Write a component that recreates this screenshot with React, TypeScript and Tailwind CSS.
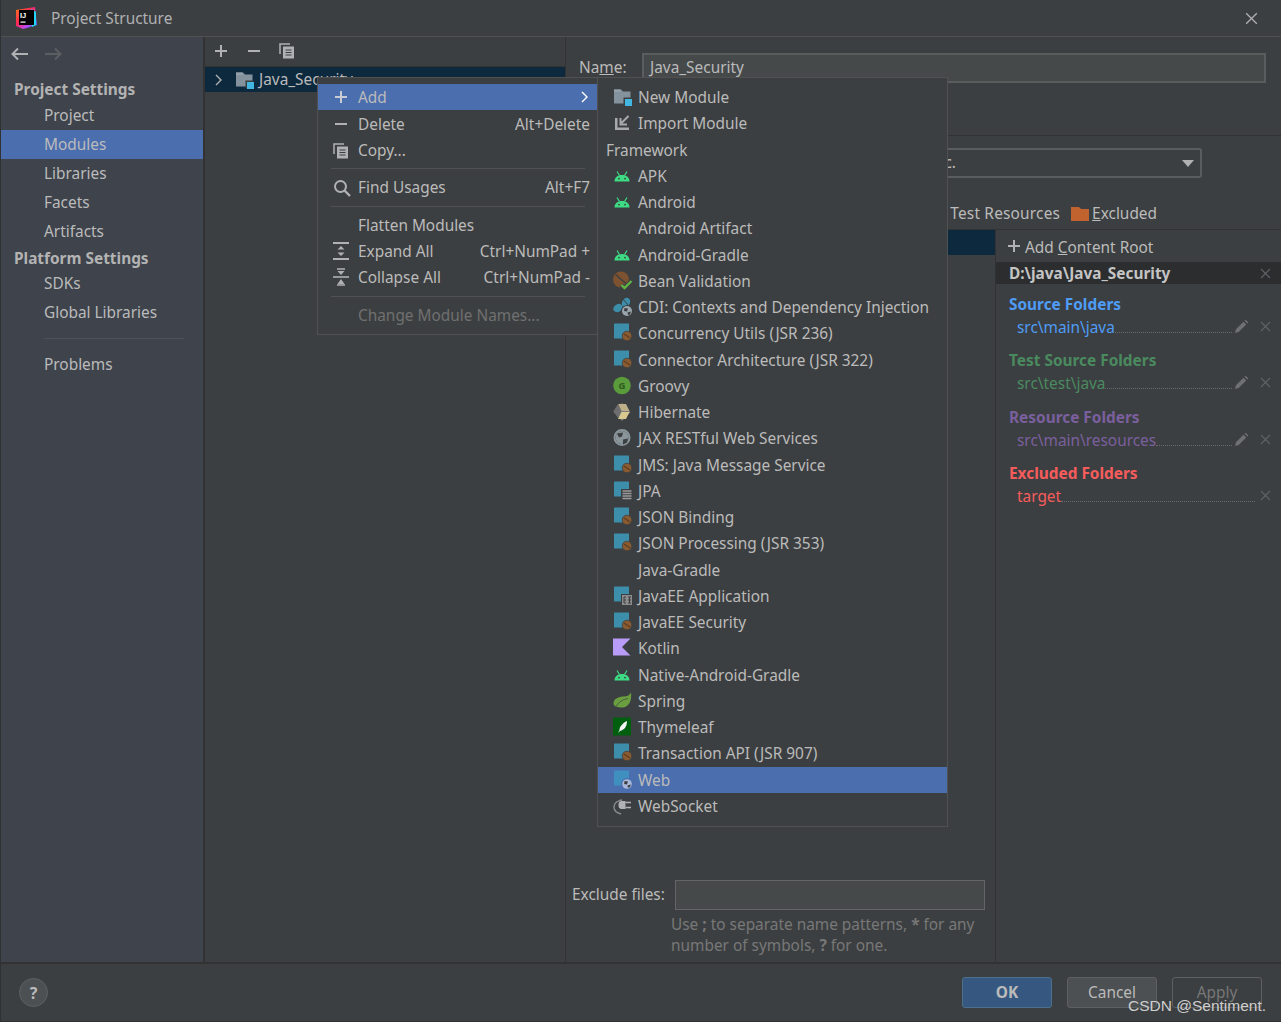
import React from "react";

const Square = ({ c = "#3d8eab" }: { c?: string }) => <rect x="1" y="0.5" width="15" height="15" rx="0.5" fill={c} />;
const Bean = () => (
  <g>
    <circle cx="14" cy="13" r="4.8" fill="#8a5a30" stroke="#3c3f41" strokeWidth="0.8" />
    <path d="M11 11 L17 15" stroke="#5e3d20" strokeWidth="1.2" />
  </g>
);
const Globe = ({ cx, cy, r, c = "#9aa5ad" }: { cx: number; cy: number; r: number; c?: string }) => (
  <g>
    <circle cx={cx} cy={cy} r={r} fill={c} />
    <path d={`M${cx - r * 0.5} ${cy - r * 0.6} l${r * 0.7} ${r * 0.1} l-${r * 0.2} ${r * 0.6} l-${r * 0.6} -${r * 0.1}z M${cx + r * 0.1} ${cy + r * 0.3} l${r * 0.7} -${r * 0.2} l-${r * 0.2} ${r * 0.6} l-${r * 0.4} ${r * 0.1}z`} fill="#3c3f41" />
  </g>
);

const S = ({ children, w = 20, h = 20 }: { children: React.ReactNode; w?: number; h?: number }) => (
  <svg width={w} height={h} viewBox="0 0 20 20" className="shrink-0">{children}</svg>
);

const ModuleIcon = () => (
  <S>
    <path d="M1 2.5h7l2 2h7.5v12H1z" fill="#84929e" />
    <path d="M1 2.5h6.5v2.5H1z" fill="#93a0aa" />
    <rect x="10.5" y="10.5" width="8" height="8" fill="#3c3f41" />
    <rect x="12" y="12" width="7" height="7" fill="#40b6e0" />
  </S>
);
const ImportIcon = () => (
  <S>
    <path d="M2 5v12h14v-2.5H4.5V5z" fill="#a7a9ab" />
    <path d="M15.5 3 L8.5 10 M7.5 5v6.5h6.5" fill="none" stroke="#a7a9ab" strokeWidth="2" />
  </S>
);
const AndroidIcon = () => (
  <S>
    <path d="M1.5 15.5c0-4 3-6.5 7.500-6.500s7.500 2.500 7.500 6.500z" fill="#3ddc84" />
    <path d="M4 5.500l2.500 4M14 5.500l-2.500 4" stroke="#3ddc84" strokeWidth="1.2" />
    <circle cx="6" cy="12.6" r="0.9" fill="#3c3f41" />
    <circle cx="12" cy="12.6" r="0.9" fill="#3c3f41" />
  </S>
);
const BeanValidation = () => (
  <S>
    <circle cx="8" cy="8.5" r="8" fill="#7d5230" />
    <path d="M2.5 3.5 L13.5 13" stroke="#3c3f41" strokeWidth="1.4" />
    <path d="M8.5 14l3 3 7-7" fill="none" stroke="#3c3f41" strokeWidth="4.5" />
    <path d="M8.5 14l3 3 7-7" fill="none" stroke="#62b543" strokeWidth="2.4" />
  </S>
);
const CdiIcon = () => (
  <S>
    <ellipse cx="13" cy="5.5" rx="3.8" ry="5" transform="rotate(30 13 5.5)" fill="#3d8eab" />
    <ellipse cx="5" cy="11" rx="3.8" ry="5" transform="rotate(60 5 11)" fill="#3d8eab" />
    <path d="M10 2 L16 9" stroke="#3c3f41" strokeWidth="1" />
    <circle cx="14" cy="14" r="6" fill="#3c3f41" />
    <Globe cx={14} cy={14} r={5} />
  </S>
);
const JeeIcon = () => (
  <S>
    <Square />
    <Bean />
  </S>
);
const GroovyIcon = () => (
  <S>
    <circle cx="9" cy="9.5" r="8.8" fill="#5a9b3b" />
    <text x="9" y="13" textAnchor="middle" fontSize="9.5" fontWeight="700" fill="#2f5c1e" fontFamily="Noto Sans, sans-serif">G</text>
  </S>
);
const HibernateIcon = () => (
  <S>
    <path d="M9 1l8.500 9-8.500 9-8.500-9z" fill="#7c7c7c" />
    <path d="M5 2h8l3.500 7H8.500z" fill="#bdb089" />
    <path d="M8.500 10h8l-3.500 7H5z" fill="#d8c98f" />
    <path d="M5 2l3.500 7-3.500 7-4.500-7z" fill="#6d6d6d" />
  </S>
);
const GlobeIcon = () => (
  <S>
    <circle cx="9" cy="9.5" r="7.5" fill="none" stroke="#8b959c" strokeWidth="2" />
    <circle cx="9" cy="9.5" r="6.5" fill="#8b959c" />
    <path d="M4 5.500l6-1-1 4-3 1zM10 11.500l5-1-1 4-4 2z" fill="#3c3f41" />
  </S>
);
const JpaIcon = () => (
  <S>
    <Square />
    <rect x="8" y="8" width="12" height="12" fill="#3c3f41" />
    <path d="M9.500 10h9M9.500 12.500h9M9.500 15h9M9.500 17.500h9" stroke="#9a9a9a" strokeWidth="1.5" />
  </S>
);
const EeAppIcon = () => (
  <S>
    <Square />
    <rect x="8" y="8" width="12" height="12" fill="#3c3f41" />
    <rect x="9" y="9" width="10" height="10" fill="#8c8c8c" />
    <path d="M11 11v6M16.500 11v6M11 11h2M11 14h2M11 17h2M15 11h3M15 14h3M15 17h3" stroke="#3c3f41" strokeWidth="1" />
  </S>
);
const KotlinIcon = () => (
  <S>
    <path d="M0 0.5h17.500L9 9l8.500 8.500H0z" fill="#b99bf8" />
  </S>
);
const SpringIcon = () => (
  <S>
    <path d="M18 1.500c1 8-2 15-9 15-4 0-8.500-1-8.500-4C.5 7.500 6 5.500 11 5.500c3 0 5-1 7-4z" fill="#6a9f3f" />
    <path d="M3 15.500C6 10.500 10 8.500 15 7.500" stroke="#3c3f41" strokeWidth="0.7" fill="none" />
  </S>
);
const ThymeleafIcon = () => (
  <S>
    <rect x="0" y="0.500" width="18" height="18" fill="#005f0f" />
    <path d="M14 4c0 6-3 9-7 10l-2 2 1.500-3c0-3 3-7 7.500-9z" fill="#f4f4f4" />
  </S>
);
const WebIcon = () => (
  <S>
    <Square c="#3f8fbf" />
    <circle cx="14" cy="14" r="6" fill="#4b6eaf" />
    <Globe cx={14} cy={14} r={4.8} c="#a8b8d8" />
  </S>
);
const SocketIcon = () => (
  <S>
    <path d="M9 4a7 7 0 0 0-3 .8A7 7 0 0 0 1 11c0 4 3 6 7 7" fill="none" stroke="#8a8d8f" strokeWidth="1.400" />
    <path d="M8 5h4.500v8H8a3 3 0 0 1-2.500-3V8A3 3 0 0 1 8 5z" fill="#afb1b3" />
    <path d="M12.500 6.500H18M12.500 11.500H18" stroke="#afb1b3" strokeWidth="1.600" />
  </S>
);
const Blank = () => <span className="w-5 shrink-0" />;

type Row = { label?: React.ReactNode; icon?: React.ReactNode; plain?: boolean; active?: boolean };
const frameworkRows: Row[] = [
  { label: "New Module", icon: <ModuleIcon /> },
  { label: "Import Module", icon: <ImportIcon /> },
  { label: "Framework", plain: true },
  { label: "APK", icon: <AndroidIcon /> },
  { label: "Android", icon: <AndroidIcon /> },
  { label: "Android Artifact", icon: <Blank /> },
  { label: "Android-Gradle", icon: <AndroidIcon /> },
  { label: "Bean Validation", icon: <BeanValidation /> },
  { label: "CDI: Contexts and Dependency Injection", icon: <CdiIcon /> },
  { label: "Concurrency Utils (JSR 236)", icon: <JeeIcon /> },
  { label: "Connector Architecture (JSR 322)", icon: <JeeIcon /> },
  { label: "Groovy", icon: <GroovyIcon /> },
  { label: "Hibernate", icon: <HibernateIcon /> },
  { label: "JAX RESTful Web Services", icon: <GlobeIcon /> },
  { label: "JMS: Java Message Service", icon: <JeeIcon /> },
  { label: "JPA", icon: <JpaIcon /> },
  { label: "JSON Binding", icon: <JeeIcon /> },
  { label: "JSON Processing (JSR 353)", icon: <JeeIcon /> },
  { label: "Java-Gradle", icon: <Blank /> },
  { label: "JavaEE Application", icon: <EeAppIcon /> },
  { label: "JavaEE Security", icon: <JeeIcon /> },
  { label: "Kotlin", icon: <KotlinIcon /> },
  { label: "Native-Android-Gradle", icon: <AndroidIcon /> },
  { label: "Spring", icon: <SpringIcon /> },
  { label: "Thymeleaf", icon: <ThymeleafIcon /> },
  { label: "Transaction API (JSR 907)", icon: <JeeIcon /> },
  { label: "Web", icon: <WebIcon />, active: true },
  { label: "WebSocket", icon: <SocketIcon /> },
];

const PlusIcon = ({ c = "#afb1b3" }: { c?: string }) => (
  <svg width="16" height="16" viewBox="0 0 16 16" className="shrink-0"><path d="M8 2v12M2 8h12" stroke={c} strokeWidth="2" /></svg>
);
const MinusIcon = () => (
  <svg width="16" height="16" viewBox="0 0 16 16" className="shrink-0"><path d="M2 8h12" stroke="#afb1b3" strokeWidth="2" /></svg>
);
const CopyIcon = () => (
  <svg width="16" height="16" viewBox="0 0 16 16" className="shrink-0">
    <path d="M1 11V1h10" fill="none" stroke="#afb1b3" strokeWidth="1.5" />
    <rect x="4" y="3.500" width="11" height="12" fill="#afb1b3" />
    <path d="M6.500 7h6M6.500 9.500h6M6.500 12h6" stroke="#3c3f41" strokeWidth="1.200" />
  </svg>
);
const SearchIcon = () => (
  <svg width="18" height="18" viewBox="0 0 18 18" className="shrink-0">
    <circle cx="7.500" cy="7.500" r="5.500" fill="none" stroke="#afb1b3" strokeWidth="2" />
    <path d="M11.500 11.500L17 17" stroke="#afb1b3" strokeWidth="2.400" />
  </svg>
);
const ExpandIcon = () => (
  <svg width="16" height="18" viewBox="0 0 16 18" className="shrink-0">
    <path d="M0 1h16M0 17h16" stroke="#afb1b3" strokeWidth="2" />
    <path d="M8 4l3.500 3.500h-7zM8 14l3.500-3.500h-7z" fill="#afb1b3" />
  </svg>
);
const CollapseIcon = () => (
  <svg width="16" height="18" viewBox="0 0 16 18" className="shrink-0">
    <path d="M0 9h16" stroke="#afb1b3" strokeWidth="1.600" />
    <path d="M8 7L4.500 3h7zM8 11l3.500 5h-7z" fill="#afb1b3" />
    <path d="M4 1h8M4 17h8" stroke="#afb1b3" strokeWidth="1.400" />
  </svg>
);
const Cross = ({ c = "#5f6264", s = 11 }: { c?: string; s?: number }) => (
  <svg width={s} height={s} viewBox="0 0 11 11" className="shrink-0"><path d="M1 1l9 9M10 1l-9 9" stroke={c} strokeWidth="1.100" /></svg>
);
const Pencil = () => (
  <svg width="15" height="15" viewBox="0 0 14 14" className="shrink-0">
    <path d="M1 13l.8-3.400 7-7 2.600 2.600-7 7zM9.800 1.600l1-1 2.600 2.600-1 1z" fill="#6e7072" />
  </svg>
);
const Sep = () => <div className="mx-[13px] h-px bg-[#515151]" />;

const M1 = ({ h = "h-[26px]", icon, label, sc, cls = "" }: { h?: string; icon?: React.ReactNode; label: string; sc?: string; cls?: string }) => (
  <div className={`flex items-center pr-[8px] ${h} ${cls}`}>
    <span className="w-[40px] pl-[15px] flex items-center justify-start shrink-0">{icon}</span>
    <span className="mt-[1px]">{label}</span>
    {sc && <span className="ml-auto mt-[1px]">{sc}</span>}
  </div>
);

const Nav = ({ label, active, head }: { label: string; active?: boolean; head?: string }) => (
  <div className={`flex items-center ${head ? `${head} pt-[3px] pl-[13px] font-bold text-[#b3b3b3]` : "h-[28.8px] pl-[43px] pt-[1px]"} ${active ? "bg-[#4b6eaf]" : ""}`}>{label}</div>
);

const FolderRow = ({ path, color, pencil = true }: { path: string; color: string; pencil?: boolean }) => (
  <div className="flex items-center h-[22px] pl-[21px] pr-[10px]">
    <span style={{ color }} className="leading-none mt-[3px]">{path}</span>
    <span className="flex-1 self-end mb-[4px] border-b border-dotted border-[#6a6a6a]" />
    {pencil && <span className="ml-[2px] w-[15px] flex"><Pencil /></span>}
    <span className={pencil ? "ml-[11px] flex" : "ml-[5px] flex"}><Cross c="#606365" /></span>
  </div>
);

const Group = ({ title, color, path, pencil, mt }: { title: string; color: string; path: string; pencil?: boolean; mt: string }) => (
  <div className={mt}>
    <div className="h-[23px] flex items-center pt-[2px] pl-[13px] font-bold" style={{ color }}>{title}</div>
    <FolderRow path={path} color={color} pencil={pencil} />
  </div>
);

export default function App() {
  return (
    <div className="relative w-[1281px] h-[1022px] overflow-hidden flex flex-col bg-[#3c3f41] text-[#bbbbbb] text-[15.4px] border-l border-b border-[#2f3133] font-['Noto_Sans','Open_Sans',sans-serif]">
      {/* title */}
      <div className="h-[37px] shrink-0 flex items-center border-b border-[#515151] pl-[14px] pr-[23px]">
        <svg width="22" height="22" viewBox="0 0 22 22" className="shrink-0">
          <defs>
            <linearGradient id="ij" x1="0" y1="0" x2="1" y2="1">
              <stop offset="0" stopColor="#f97a12" />
              <stop offset="0.4" stopColor="#fe2857" />
              <stop offset="0.7" stopColor="#b74af7" />
              <stop offset="1" stopColor="#087cfa" />
            </linearGradient>
          </defs>
          <path d="M1 3L20 0l2 18-14 4-7-3z" fill="url(#ij)" />
          <path d="M16 2l5 3v13l-4 2z" fill="#21d7f7" />
          <rect x="4" y="3" width="15" height="15" fill="#000" />
          <text x="5" y="11" fontSize="7.500" fontWeight="700" fill="#fff" fontFamily="Liberation Sans, sans-serif">IJ</text>
          <rect x="5.500" y="14.500" width="5" height="1.200" fill="#fff" />
        </svg>
        <span className="ml-[14px] mt-[2px] text-[#afb1b3]">Project Structure</span>
        <span className="ml-auto flex"><Cross c="#afb1b3" s={13} /></span>
      </div>

      {/* body */}
      <div className="h-[927px] shrink-0 flex border-b-2 border-[#323232]">
        <aside className="w-[202px] shrink-0 bg-[#3e434c]">
          <div className="h-[38px] pb-[4px] flex items-center pl-[9px] gap-[13px]">
            <svg width="20" height="16" viewBox="0 0 20 16"><path d="M18 8H3M8 2.500L2.500 8 8 13.500" fill="none" stroke="#afb1b3" strokeWidth="2" /></svg>
            <svg width="20" height="16" viewBox="0 0 20 16"><path d="M2 8h15M12 2.500L17.500 8 12 13.500" fill="none" stroke="#5c5f62" strokeWidth="2" /></svg>
          </div>
          <Nav head="h-[26px]" label="Project Settings" />
          <Nav label="Project" />
          <Nav label="Modules" active />
          <Nav label="Libraries" />
          <Nav label="Facets" />
          <Nav label="Artifacts" />
          <Nav head="h-[24px]" label="Platform Settings" />
          <Nav label="SDKs" />
          <Nav label="Global Libraries" />
          <div className="mt-[11px] ml-[43px] mr-[19px] h-px bg-[#4d515a]" />
          <div className="mt-[11px]"><Nav label="Problems" /></div>
        </aside>
        <div className="w-[2px] shrink-0 bg-[#323232]" />
        <section className="w-[361px] shrink-0 border-r border-[#323232]">
          <div className="h-[30px] pb-[2px] flex items-center pl-[8px] gap-[17px] border-b border-[#323232]">
            <PlusIcon /><MinusIcon /><CopyIcon />
          </div>
          <div className="h-[25px] flex items-center bg-[#0d293e] pl-[9px]">
            <svg width="10" height="12" viewBox="0 0 10 12" className="shrink-0"><path d="M2 1l5 5-5 5" fill="none" stroke="#afb1b3" strokeWidth="1.400" /></svg>
            <span className="ml-[11px] flex"><ModuleIcon /></span>
            <span className="ml-[4px] mt-[1px]">Java_Security</span>
          </div>
        </section>

        <main className="flex-1 min-w-0 flex flex-col">
          <div className="h-[99px] shrink-0 border-b border-[#323232] flex items-start pt-[16px] pl-[13px] pr-[15px]">
            <span className="w-[63px] h-[30px] flex items-center">Na<span className="underline">m</span>e:</span>
            <div className="flex-1 h-[30px] bg-[#45494a] border-2 border-[#5a5d5e] flex items-center pl-[6px]">Java_Security</div>
          </div>
          <div className="h-[94px] shrink-0 border-b border-[#323232] pl-[74px] pr-[79px] pt-[12px] flex flex-col">
            <div className="h-[30px] rounded-[3px] border-2 border-[#5a5d5e] flex items-center justify-end pr-[6px]">
              <span className="mr-[226px] whitespace-nowrap">etc.</span>
              <svg width="12" height="7" viewBox="0 0 12 7" className="shrink-0"><path d="M0 0h12L6 7z" fill="#afb1b3" /></svg>
            </div>
            <div className="mt-[26px] h-[20px] flex items-center justify-end -mr-[79px] pr-[124px]">
              <span className="tracking-[0.2px]">Test Resources</span>
              <svg width="18" height="14" viewBox="0 0 18 14" className="ml-[11px]"><path d="M0 0h8l2 2h8v12H0z" fill="#c1632f" /></svg>
              <span className="ml-[3px]"><span className="underline">E</span>xcluded</span>
            </div>
          </div>
          <div className="flex-1 min-h-0 flex">
            <div className="w-[430px] shrink-0 flex flex-col border-r border-[#323232]">
              <div className="h-[25px] bg-[#0d293e]" />
              <div className="mt-auto pl-[6px] pr-[10px] pb-[6px]">
                <div className="flex items-center">
                  <span className="w-[103px] mb-[1px]">Exclude files:</span>
                  <div className="flex-1 h-[30px] bg-[#45494a] border border-[#646464]" />
                </div>
                <div className="mt-[4px] ml-[99px] text-[#787878] leading-[21px]">
                  Use <b>;</b> to separate name patterns, <b>*</b> for any<br />number of symbols, <b>?</b> for one.
                </div>
              </div>
            </div>
            <div className="flex-1 min-w-0 flex flex-col">
              <div className="h-[32px] flex items-center pl-[10px]">
                <PlusIcon />
                <span className="ml-[3px] mt-[3px]">Add <span className="underline">C</span>ontent Root</span>
              </div>
              <div className="h-[22px] bg-[#2b2d2f] flex items-center pl-[13px] pr-[10px] pt-[1px] font-bold text-[#c4c4c4]">
                D:\java\Java_Security
                <span className="ml-auto flex"><Cross c="#606365" /></span>
              </div>
              <Group mt="mt-[8px]" title="Source Folders" color="#4e9cf5" path="src\main\java" pencil />
              <Group mt="mt-[11px]" title="Test Source Folders" color="#4a8a5f" path="src\test\java" pencil />
              <Group mt="mt-[12px]" title="Resource Folders" color="#7a5f9e" path="src\main\resources" pencil />
              <Group mt="mt-[11px]" title="Excluded Folders" color="#f75c5c" path="target" pencil={false} />
            </div>
          </div>
        </main>
      </div>

      {/* footer */}
      <div className="flex-1 flex items-center pl-[18px] pr-[19px]">
        <div className="w-[29px] h-[29px] rounded-full bg-[#4c5052] border border-[#5e6060] flex items-center justify-center font-bold text-[16px]">?</div>
        <div className="ml-auto flex gap-[15px]">
          <div className="w-[90px] h-[31px] rounded-[3px] bg-[#365880] border border-[#4c708c] flex items-center justify-center font-bold">OK</div>
          <div className="w-[90px] h-[31px] rounded-[3px] bg-[#4c5052] border border-[#5e6060] flex items-center justify-center">Cancel</div>
          <div className="w-[90px] h-[31px] rounded-[3px] border border-[#5e6060] flex items-center justify-center text-[#777777]">Apply</div>
        </div>
      </div>

      {/* context menu */}
      <div className="absolute left-[316px] top-[77px] w-[281px] h-[258px] bg-[#3c3f41] border border-[#515151] border-r-0 pt-[6px]">
        <div className="flex items-center h-[26px] bg-[#4b6eaf] pr-[8px]">
          <span className="w-[40px] pl-[15px] flex shrink-0"><PlusIcon c="#c8ccd4" /></span>
          <span className="mt-[1px]">Add</span>
          <svg width="10" height="12" viewBox="0 0 10 12" className="ml-auto"><path d="M2 1l5 5-5 5" fill="none" stroke="#ffffff" strokeWidth="1.400" /></svg>
        </div>
        <M1 h="h-[28px]" icon={<MinusIcon />} label="Delete" sc="Alt+Delete" />
        <M1 h="h-[25px]" icon={<CopyIcon />} label="Copy..." />
        <div className="mt-[5px]"><Sep /></div>
        <M1 h="h-[37px]" icon={<SearchIcon />} label="Find Usages" sc="Alt+F7" />
        <Sep />
        <M1 h="h-[37px]" label="Flatten Modules" />
        <div className="-mt-[6px]"><M1 h="h-[26px]" icon={<ExpandIcon />} label="Expand All" sc="Ctrl+NumPad +" /></div>
        <M1 h="h-[26px]" icon={<CollapseIcon />} label="Collapse All" sc="Ctrl+NumPad -" />
        <div className="mt-[6px]"><Sep /></div>
        <M1 h="h-[37px]" label="Change Module Names..." cls="text-[#707070]" />
      </div>

      {/* framework submenu */}
      <div className="absolute left-[596px] top-[77px] w-[351px] h-[750px] bg-[#3c3f41] border border-[#515151] pt-[6px]">
        {frameworkRows.map((r, i) =>
          r.plain ? (
            <div key={i} className="h-[26.26px] flex items-center pl-[8px]"><span className="mt-[1px]">{r.label}</span></div>
          ) : (
            <div key={i} className={`h-[26.26px] flex items-center pl-[15px] ${r.active ? "bg-[#4b6eaf]" : ""}`}>
              <span className="w-[25px] flex shrink-0">{r.icon}</span>
              <span className="mt-[1px]">{r.label}</span>
            </div>
          )
        )}
      </div>

      {/* watermark */}
      <div className="absolute left-[1127px] top-[997px] text-[15.5px] leading-[18px] text-[#cfcfcf] font-['Liberation_Sans',sans-serif]">CSDN @Sentiment.</div>
    </div>
  );
}
